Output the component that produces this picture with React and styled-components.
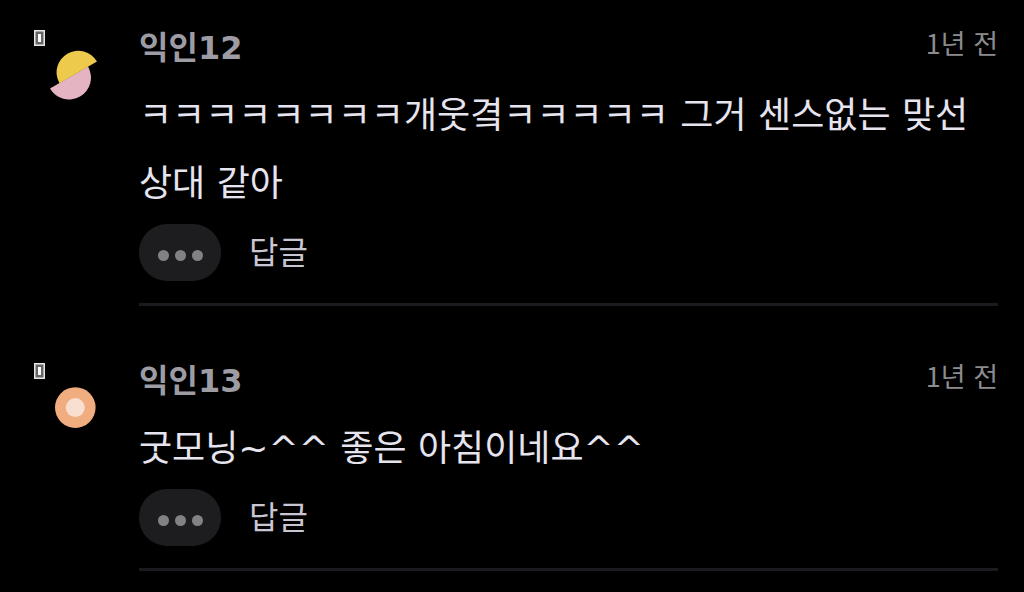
import React from "react";
import styled, { createGlobalStyle } from "styled-components";

const GlobalStyle = createGlobalStyle`
  *, *::before, *::after { box-sizing: border-box; }
  html, body { margin: 0; background: #000; }
  body {
    font-family: "DejaVu Sans", "Noto Sans CJK KR", sans-serif;
    color: #e6e4ee;
  }
  button { font-family: inherit; }
`;

const CommentList = styled.main`
  display: flex;
  flex-direction: column;
  gap: 55px;
  padding: 28px 26px 20px 34px;
`;

const Comment = styled.article`
  display: grid;
  grid-template-columns: 105px minmax(0, 1fr);
`;

const Profile = styled.div`
  display: flex;
  align-items: flex-start;
  gap: 5px;
  padding-top: 2px;
`;

const Badge = styled.svg`
  width: 11px;
  height: 16px;
  flex: none;
`;

const Avatar = styled.svg`
  width: 50px;
  height: 50px;
  flex: none;
  margin-top: 20px;
`;

const Content = styled.div`
  border-bottom: 3px solid #1b1b1f;
  padding-bottom: 22px;
`;

const Header = styled.header`
  display: flex;
  justify-content: space-between;
  height: 40px;
`;

const Author = styled.h2`
  margin: 0;
  font-size: 32px;
  line-height: 40px;
  font-weight: 700;
  color: #9d9ca4;
`;

const Time = styled.time`
  font-family: "Noto Sans CJK KR", sans-serif;
  font-size: 27px;
  line-height: 30px;
  color: #8c8c8e;
`;

const Body = styled.p`
  margin: 14px 0 6px;
  font-size: 36px;
  line-height: 68px;
  word-break: keep-all;
`;

const Actions = styled.div`
  display: flex;
  align-items: center;
  gap: 28px;
`;

const MoreButton = styled.button`
  display: flex;
  align-items: center;
  justify-content: center;
  gap: 6px;
  width: 82px;
  height: 57px;
  padding: 5px 0 0;
  border: 0;
  border-radius: 28px;
  background: #1d1d20;
  cursor: pointer;
`;

const Dot = styled.span`
  width: 11px;
  height: 11px;
  border-radius: 50%;
  background: #828284;
`;

const ReplyButton = styled.button`
  padding: 0;
  border: 0;
  background: none;
  color: #c9c6d4;
  font-size: 32px;
  line-height: 40px;
  cursor: pointer;
`;

const comments = [
  {
    id: 12,
    author: "익인12",
    time: "1년 전",
    text: "ㅋㅋㅋㅋㅋㅋㅋㅋ개웃곀ㅋㅋㅋㅋㅋ 그거 센스없는 맞선 상대 같아",
    avatar: "halves",
  },
  {
    id: 13,
    author: "익인13",
    time: "1년 전",
    text: "굿모닝~^^ 좋은 아침이네요^^",
    avatar: "ring",
  },
];

function ProfileBadge() {
  return (
    <Badge viewBox="0 0 11 16" aria-hidden="true">
      <rect width="11" height="16" fill="#e8e8e8" />
      <rect x="1.5" y="1.5" width="8" height="13" fill="#666" />
      <rect x="4" y="4" width="3" height="8" fill="#fff" />
    </Badge>
  );
}

function ProfileAvatar({ kind }) {
  return (
    <Avatar viewBox="0 0 50 50" aria-hidden="true">
      {kind === "halves" ? (
        <>
          <path d="M0 38.6A21.8 21.8 0 0 0 38 16.6Z" fill="#e5b4c3" />
          <path d="M47 11.6A21.6 21.6 0 0 0 9.5 33.3Z" fill="#edca4c" />
        </>
      ) : (
        <>
          <circle cx="25.3" cy="24.6" r="20.3" fill="#f0ad80" />
          <circle cx="25.3" cy="24.6" r="9.5" fill="#f8dfcf" />
        </>
      )}
    </Avatar>
  );
}

export default function App() {
  return (
    <>
      <GlobalStyle />
      <CommentList lang="ko">
        {comments.map((c) => (
          <Comment key={c.id}>
            <Profile>
              <ProfileBadge />
              <ProfileAvatar kind={c.avatar} />
            </Profile>
            <Content>
              <Header>
                <Author>{c.author}</Author>
                <Time>{c.time}</Time>
              </Header>
              <Body>{c.text}</Body>
              <Actions>
                <MoreButton type="button" aria-label="더보기">
                  <Dot />
                  <Dot />
                  <Dot />
                </MoreButton>
                <ReplyButton type="button">답글</ReplyButton>
              </Actions>
            </Content>
          </Comment>
        ))}
      </CommentList>
    </>
  );
}
